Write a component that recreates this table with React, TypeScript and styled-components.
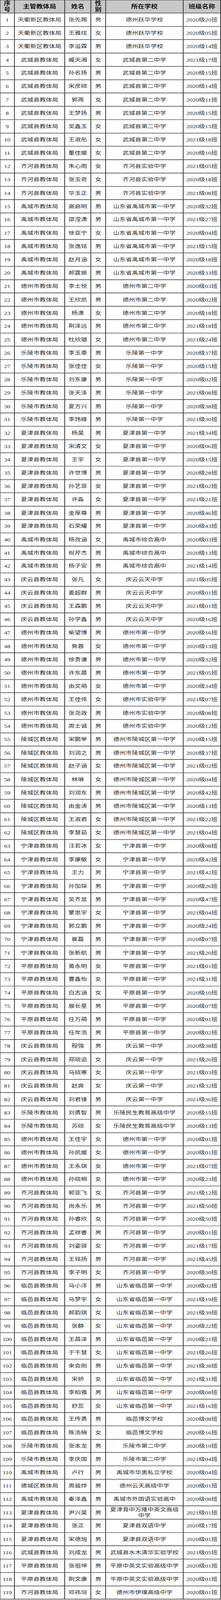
import React from "react";
import styled, { createGlobalStyle } from "styled-components";

const GlobalStyle = createGlobalStyle`
  html,
  body {
    margin: 0;
    padding: 0;
    background: #ffffff;
  }
  body {
    font-family: "Liberation Serif", "Noto Sans CJK SC", serif;
  }
`;

const FRAME_H = 4096;
const FIT = FRAME_H / 5250;
const LINE = "#3a3a3a";

const Frame = styled.div`
  width: 567px;
  height: ${FRAME_H}px;
  overflow: hidden;
`;

const Sheet = styled.div`
  width: 567px;
  display: grid;
  grid-template-columns: 38px 129px 67px 38px 199px 96px;
  grid-template-rows: 44px;
  grid-auto-rows: 43.74px;
  transform: scaleY(${FIT});
  transform-origin: 0 0;
`;

const Cell = styled.div<{ $first?: boolean; $head?: boolean; $wide?: boolean }>`
  box-sizing: border-box;
  min-width: 0;
  min-height: 0;
  display: flex;
  align-items: center;
  justify-content: center;
  text-align: center;
  overflow: hidden;
  padding: ${(p) => (p.$wide ? "0 4px" : "0 2px")};
  background: ${(p) => (p.$head ? "#c8c8c8" : "#ffffff")};
  border-right: 2px solid ${LINE};
  border-bottom: 2px solid ${LINE};
  border-left: ${(p) => (p.$first ? `1px solid ${LINE}` : "0")};
  border-top: ${(p) => (p.$head ? `1px solid ${LINE}` : "0")};
  font-size: ${(p) => (p.$head ? "17px" : "16px")};
  font-weight: ${(p) => (p.$head ? 700 : 400)};
  line-height: ${(p) => (p.$head ? "20px" : "19px")};
  color: ${(p) => (p.$head ? "#111111" : "#2a2a2a")};
`;

const headers = ["序号", "主管教体局", "姓名", "性别", "所在学校", "班级名称"];

// 主管教体局|姓名|性别|所在学校|班级名称
const raw = `天衢新区教体局|张先赐|男|德州跃华学校|2020级20班
天衢新区教体局|王雅炫|女|德州跃华学校|2020级05班
天衢新区教体局|李溢霖|男|德州跃华学校|2020级14班
武城县教体局|臧天湘|女|武城县第二中学|2021级17班
武城县教体局|孙名扬|男|武城县第二中学|2020级15班
武城县教体局|宋彦硕|男|武城县第二中学|2020级14班
武城县教体局|郭燕|女|武城县第二中学|2020级11班
武城县教体局|王梦扬|男|武城县第二中学|2020级15班
武城县教体局|吴鑫玉|女|武城县第二中学|2020级15班
武城县教体局|王淑彤|女|武城县第二中学|2021级18班
武城县教体局|董佳媛|女|武城县第二中学|2020级10班
齐河县教体局|朱心雨|女|齐河县实验中学|2021级05班
齐河县教体局|张玉奇|女|齐河县实验中学|2020级18班
齐河县教体局|华玉正|男|齐河县实验中学|2021级08班
禹城市教体局|高启明|男|山东省禹城市第一中学|2020级32班
禹城市教体局|邵滢潇|男|山东省禹城市第一中学|2021级27班
禹城市教体局|徐亚宁|女|山东省禹城市第一中学|2020级04班
禹城市教体局|张逸铭|男|山东省禹城市第一中学|2021级15班
禹城市教体局|赵月涵|女|山东省禹城市第一中学|2020级18班
禹城市教体局|郝霆振|男|山东省禹城市第一中学|2020级33班
德州市教体局|李士悦|男|德州市第二中学|2020级03班
德州市教体局|王欣凯|男|德州市第二中学|2020级02班
德州市教体局|杨潇|女|德州市第二中学|2020级18班
德州市教体局|荆泽远|男|德州市第二中学|2021级18班
德州市教体局|杜欣璐|女|德州市第二中学|2021级24班
乐陵市教体局|李玉豪|男|乐陵第一中学|2020级37班
乐陵市教体局|张佳佳|女|乐陵第一中学|2020级15班
乐陵市教体局|刘东康|男|乐陵第一中学|2020级02班
乐陵市教体局|张天泽|男|乐陵第一中学|2021级08班
乐陵市教体局|夏方兴|男|乐陵第一中学|2020级38班
乐陵市教体局|李玮峰|男|乐陵第一中学|2021级30班
夏津县教体局|杨昊|男|夏津县第一中学|2021级34班
夏津县教体局|宋清文|女|夏津县第一中学|2020级06班
夏津县教体局|王宇|女|夏津县第一中学|2020级15班
夏津县教体局|许世博|男|夏津县第一中学|2020级28班
夏津县教体局|孙艺菲|女|夏津县第一中学|2021级02班
夏津县教体局|许淼|女|夏津县第一中学|2021级21班
夏津县教体局|金厚尊|男|夏津县第一中学|2020级46班
夏津县教体局|石荣耀|男|夏津县第一中学|2020级43班
禹城市教体局|杨孜涵|女|禹城市综合高中|2020级03班
禹城市教体局|祝芹杰|男|禹城市综合高中|2020级13班
禹城市教体局|杨子安|男|禹城市综合高中|2021级14班
庆云县教体局|张凡|女|庆云云天中学|2021级05班
庆云县教体局|姜超群|男|庆云云天中学|2020级01班
庆云县教体局|王森鹏|男|庆云云天中学|2021级01班
庆云县教体局|孙学鑫|男|庆云云天中学|2020级16班
德州市教体局|柴望博|男|德州市第一中学|2020级16班
德州市教体局|焦蓉|女|德州市第一中学|2020级13班
德州市教体局|徐贵谦|男|德州市第一中学|2020级32班
德州市教体局|许东晨|男|德州市第一中学|2021级05班
德州市教体局|由文萌|女|德州市第一中学|2020级34班
德州市教体局|王佳伟|女|德州市实验中学|2021级07班
德州市教体局|张尧政|男|德州市实验中学|2020级08班
德州市教体局|周士诚|男|德州市实验中学|2020级12班
陵城区教体局|宋鹏举|男|德州市陵城区第一中学|2020级15班
陵城区教体局|刘润之|男|德州市陵城区第一中学|2020级37班
陵城区教体局|赵子涵|女|德州市陵城区第一中学|2021级02班
陵城区教体局|林琳|女|德州市陵城区第一中学|2020级04班
陵城区教体局|刘润东|男|德州市陵城区第一中学|2020级42班
陵城区教体局|由金涛|男|德州市陵城区第一中学|2020级13班
陵城区教体局|王淑君|女|德州市陵城区第一中学|2021级22班
陵城区教体局|李慧茹|女|德州市陵城区第一中学|2021级04班
宁津县教体局|汪若冰|女|宁津县第一中学|2020级08班
宁津县教体局|李康敏|女|宁津县第一中学|2020级42班
宁津县教体局|王力|男|宁津县第一中学|2021级42班
宁津县教体局|孙加琛|男|宁津县第一中学|2020级26班
宁津县教体局|吴齐显|男|宁津县第一中学|2020级47班
宁津县教体局|蒙思宇|女|宁津县第一中学|2021级04班
宁津县教体局|郭立鹏|男|宁津县第一中学|2020级24班
宁津县教体局|崔磊|男|宁津县第一中学|2020级07班
宁津县教体局|张新航|男|宁津县第一中学|2021级20班
平原县教体局|黄永明|女|平原县第一中学|2021级01班
平原县教体局|曹鑫怡|女|平原县第一中学|2021级31班
平原县教体局|白志涵|女|平原县第一中学|2020级10班
平原县教体局|展长星|男|平原县第一中学|2020级07班
平原县教体局|任万萌|男|平原县第一中学|2020级01班
平原县教体局|任年浩|男|平原县第一中学|2020级02班
庆云县教体局|程强|男|庆云第一中学|2020级38班
庆云县教体局|郑晓追|女|庆云第一中学|2021级26班
庆云县教体局|马晓寒|女|庆云第一中学|2021级03班
庆云县教体局|赵爽|女|庆云第一中学|2021级32班
庆云县教体局|刘君锋|男|庆云第一中学|2021级36班
乐陵市教体局|刘勇智|男|乐陵民生教育高级中学|2020级15班
乐陵市教体局|苏硕|女|乐陵民生教育高级中学|2020级13班
德州市教体局|王佳宇|女|德州市第一中学|2020级01班
德州市教体局|孙凯媛|女|德州市第一中学|2020级01班
德州市教体局|王永琪|女|德州市第一中学|2021级07班
德州市教体局|孙晓桐|女|德州市第一中学|2020级23班
齐河县教体局|郭亚飞|女|齐河县第一中学|2021级12班
齐河县教体局|尚永乐|男|齐河县第一中学|2021级50班
齐河县教体局|孙睿欣|女|齐河县第一中学|2020级50班
齐河县教体局|孟祥睿|男|齐河县第一中学|2020级01班
齐河县教体局|刘姿驿|女|齐河县第一中学|2021级17班
齐河县教体局|王铭扬|男|齐河县第一中学|2021级45班
齐河县教体局|李子明|女|齐河县第一中学|2020级30班
临邑县教体局|马小洋|男|山东省临邑第一中学|2020级02班
临邑县教体局|马梦宇|女|山东省临邑第一中学|2021级19班
临邑县教体局|郝韵琪|女|山东省临邑第一中学|2021级39班
临邑县教体局|张静|女|山东省临邑第一中学|2020级22班
临邑县教体局|王昌泽|男|山东省临邑第一中学|2020级21班
临邑县教体局|于千慧|女|山东省临邑第一中学|2021级26班
临邑县教体局|来会刚|男|山东省临邑第一中学|2021级38班
临邑县教体局|宋娇|女|山东省临邑第一中学|2021级31班
临邑县教体局|李柏雅|男|山东省临邑第一中学|2020级08班
临邑县教体局|舒蕊|女|山东省临邑第一中学|2021级16班
临邑县教体局|王传勇|男|临邑博文学校|2020级08班
临邑县教体局|陈浩楠|女|临邑博文学校|2020级16班
乐陵市教体局|张本龙|男|乐陵市第二中学|2020级10班
乐陵市教体局|李庆国|男|乐陵市第二中学|2021级04班
禹城市教体局|卢行|男|禹城市华奥私立学校|2020级04班
德城区教体局|周骏烨|男|德州云天高级中学|2020级01班
禹城市教体局|秦泽鑫|男|禹城市外国语实验高中|2020级08班
夏津县教体局|尹兴昊|男|夏津育中万隆中英文高级中学|2021级01班
夏津县教体局|张正|男|夏津县双语中学|2020级17班
夏津县教体局|宋德旭|男|夏津县双语中学|2020级01班
武城县教体局|刘成龙|男|武城县水木清华实验学校|2021级05班
平原县教体局|张祖坤|男|平原中英文实验高级中学|2020级01班
平原县教体局|荆文康|男|平原中英文实验高级中学|2020级01班
齐河县教体局|邓祎培|女|德州市伊璞高级中学|2020级01班`;

const rows = raw.split("\n").map((line) => line.split("|"));

const App = () => {
  return (
    <>
      <GlobalStyle />
      <Frame>
        <Sheet>
          {headers.map((h, i) => (
            <Cell key={h} $head $first={i === 0} $wide={i === 4}>
              {h}
            </Cell>
          ))}
          {rows.map((r, i) => (
            <React.Fragment key={i}>
              <Cell $first>{i + 1}</Cell>
              {r.map((text, j) => (
                <Cell key={j} $wide={j === 3}>
                  {text}
                </Cell>
              ))}
            </React.Fragment>
          ))}
        </Sheet>
      </Frame>
    </>
  );
};

export default App;
